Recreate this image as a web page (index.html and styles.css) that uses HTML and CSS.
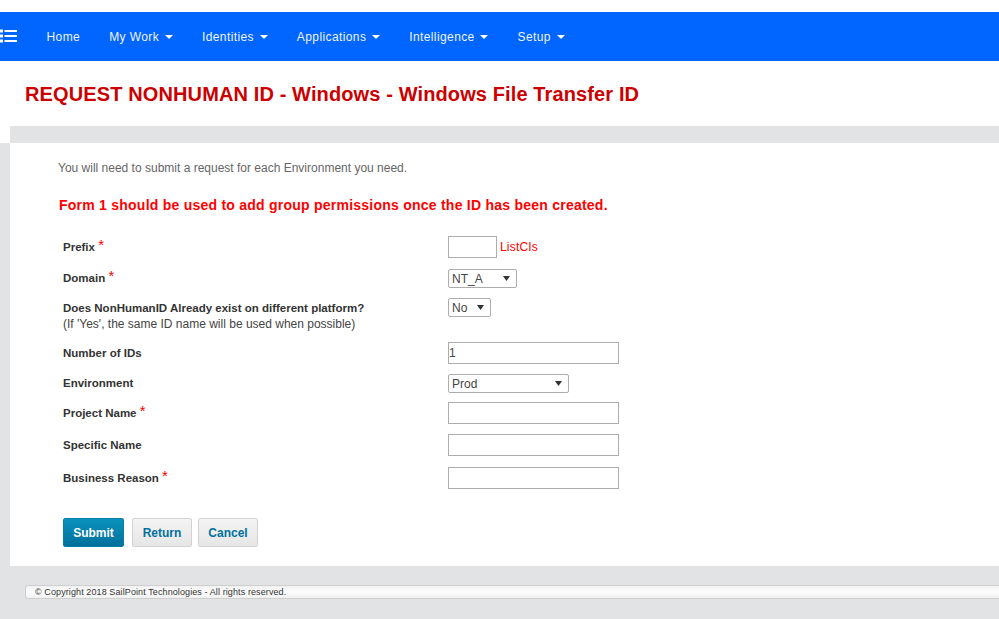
FILE: index.html
```html
<!DOCTYPE html>
<html lang="en">
<head>
  <meta charset="UTF-8">
  <title>Request NonHuman ID</title>
  <link rel="stylesheet" href="styles.css">
</head>
<body>
  <nav class="topnav">
    <svg class="menu-icon" width="17" height="14" viewBox="0 0 17 14">
      <path d="M0 .5h3v3H0zM0 5.5h3v3H0zM0 10.5h3v3H0z" fill="#fff"/>
      <path d="M4.5 1h12.5v2H4.5zM4.5 6h12.5v2H4.5zM4.5 11h12.5v2H4.5z" fill="#fff"/>
    </svg>
    <ul class="nav-links">
      <li>Home</li>
      <li>My Work <span class="caret"></span></li>
      <li>Identities <span class="caret"></span></li>
      <li>Applications <span class="caret"></span></li>
      <li>Intelligence <span class="caret"></span></li>
      <li>Setup <span class="caret"></span></li>
    </ul>
  </nav>

  <h1 class="page-title">REQUEST NONHUMAN ID - Windows - Windows File Transfer ID</h1>

  <div class="page-band"></div>
  <div class="page-body">
    <main class="content">
      <p class="intro">You will need to submit a request for each Environment you need.</p>
      <p class="notice">Form 1 should be used to add group permissions once the ID has been created.</p>

      <form class="request-form">
        <div class="row row-prefix">
          <label>Prefix <span class="req">*</span></label>
          <div class="field"><input class="input-short" type="text"> <a class="list-link">ListCIs</a></div>
        </div>
        <div class="row row-domain">
          <label>Domain <span class="req">*</span></label>
          <div class="field"><select class="select-domain"><option>NT_A</option></select></div>
        </div>
        <div class="row row-exists">
          <label>Does NonHumanID Already exist on different platform?
            <small>(If 'Yes', the same ID name will be used when possible)</small></label>
          <div class="field"><select class="select-no"><option>No</option></select></div>
        </div>
        <div class="row row-count">
          <label>Number of IDs</label>
          <div class="field"><input class="input-long" type="text" value="1"></div>
        </div>
        <div class="row row-env">
          <label>Environment</label>
          <div class="field"><select class="select-env"><option>Prod</option></select></div>
        </div>
        <div class="row row-text">
          <label>Project Name <span class="req">*</span></label>
          <div class="field"><input class="input-long" type="text"></div>
        </div>
        <div class="row row-text row-specific">
          <label>Specific Name</label>
          <div class="field"><input class="input-long" type="text"></div>
        </div>
        <div class="row row-text">
          <label>Business Reason <span class="req">*</span></label>
          <div class="field"><input class="input-long" type="text"></div>
        </div>
        <div class="buttons">
          <button type="button" class="btn btn-primary">Submit</button>
          <button type="button" class="btn btn-return">Return</button>
          <button type="button" class="btn">Cancel</button>
        </div>
      </form>
    </main>
  </div>

  <footer class="footer">
    <div class="footer-bar">© Copyright 2018 SailPoint Technologies - All rights reserved.</div>
  </footer>
</body>
</html>
```

FILE: styles.css
```css
html, body {margin:0; padding:0; height:100%;}
body {font-family:"Liberation Sans", Arial, sans-serif; font-size:12px; color:#555; background:#fff; overflow:hidden;}

/* top navigation */
.topnav {display:flex; align-items:center; height:49px; margin-top:12px; background:#0066ff; color:#fff;}
.menu-icon {flex:none; margin-top:-1px;}
.nav-links {display:flex; list-style:none; margin:0 0 0 15px; padding:0;}
.nav-links li {padding:0 14.6px 0 14.5px; font-size:12px; letter-spacing:.4px; white-space:nowrap; color:#eef4ff;}
.caret {display:inline-block; width:0; height:0; margin-left:2px; vertical-align:middle; border-top:4px solid #fff; border-left:4px solid transparent; border-right:4px solid transparent;}

.page-title {margin:0; height:65px; padding-left:25px; font-size:20px; line-height:67px; font-weight:bold; letter-spacing:.12px; color:#cc0000; white-space:nowrap;}

/* grey frame round the content */
.page-band {height:17px; margin-left:10px; background:#e2e3e5;}
.page-body {padding-left:10px; background:#e2e3e5;}
.content {height:423px; padding:0 0 0 48px; background:#fff; box-sizing:border-box; overflow:hidden;}

.intro {margin:0; padding-top:18px; line-height:14px; color:#666; font-size:12px;}
.notice {margin:0; padding:21px 0 0 1px; line-height:18px; font-size:14px; font-weight:bold; color:#ff0000; letter-spacing:.24px;}

/* form rows */
.request-form {margin-top:22px; padding-left:5px;}
.row {display:flex; align-items:flex-start;}
.row label {flex:none; width:385px; font-weight:bold; color:#333; font-size:11.5px; line-height:16px;}
.row small {display:block; font-size:12px; font-weight:normal; color:#444;}
.req {color:#ff0000; font-size:15px; font-weight:normal; line-height:10px; position:relative; top:-1px;}
.field {display:flex; align-items:center;}

.row-prefix {height:33px;}
.row-prefix label {padding-top:3px;}
.row-domain {height:29px;}
.row-domain label {padding-top:1px;}
.row-exists {height:44px;}
.row-exists label {padding-top:2px;}
.row-count {height:32px;}
.row-count label {padding-top:3px;}
.row-env {height:28px;}
.row-env label {padding-top:1px;}
.row-text {height:32px;}
.row-text label {padding-top:3px;}
.row-specific {height:33px;}

input, select {box-sizing:border-box; font-family:"Liberation Sans", Arial, sans-serif; font-size:12px; color:#444; background-color:#fff; border:1px solid #adadad; border-radius:0; margin:0;}
input {padding:0;}
select {height:19px; padding:0 0 0 3px; border-radius:2px; appearance:none; background-image:url("data:image/svg+xml,%3Csvg xmlns='http://www.w3.org/2000/svg' width='7' height='5'%3E%3Cpath d='M0 0h7L3.5 5z' fill='%23333'/%3E%3C/svg%3E"); background-repeat:no-repeat; background-position:right 6px center;}
.input-short {width:49px; height:22px;}
.input-long {width:171px; height:22px;}
.select-domain {width:69px;}
.select-no {width:43px;}
.select-env {width:121px;}
.list-link {margin-left:3px; color:#ff0000; font-size:12px; letter-spacing:.2px;}

/* buttons */
.buttons {display:flex; gap:8px; margin-top:19px;}
.btn {box-sizing:border-box; height:29px; width:60px; padding:0; font:bold 12px "Liberation Sans", Arial, sans-serif; color:#00709f; background:linear-gradient(#f4f4f4, #e6e6e6); border:1px solid #d2d2d2; border-radius:2px;}
.btn-primary {width:61px; color:#fff; background:linear-gradient(#0a93bd, #006f9c); border-color:#0a7fa6;}
.btn-return {margin-right:-2px;}

/* footer */
.footer {height:53px; padding:19px 0 0 25px; box-sizing:border-box; background:#e2e3e5;}
.footer-bar {box-sizing:border-box; height:14px; padding-left:9px; font-size:9px; line-height:12px; letter-spacing:.1px; color:#333; background:linear-gradient(#f2f2f2, #fcfcfc 50%, #f0f0f0); border:1px solid #cfcfcf; border-right:none; border-radius:3px 0 0 3px;}
```
